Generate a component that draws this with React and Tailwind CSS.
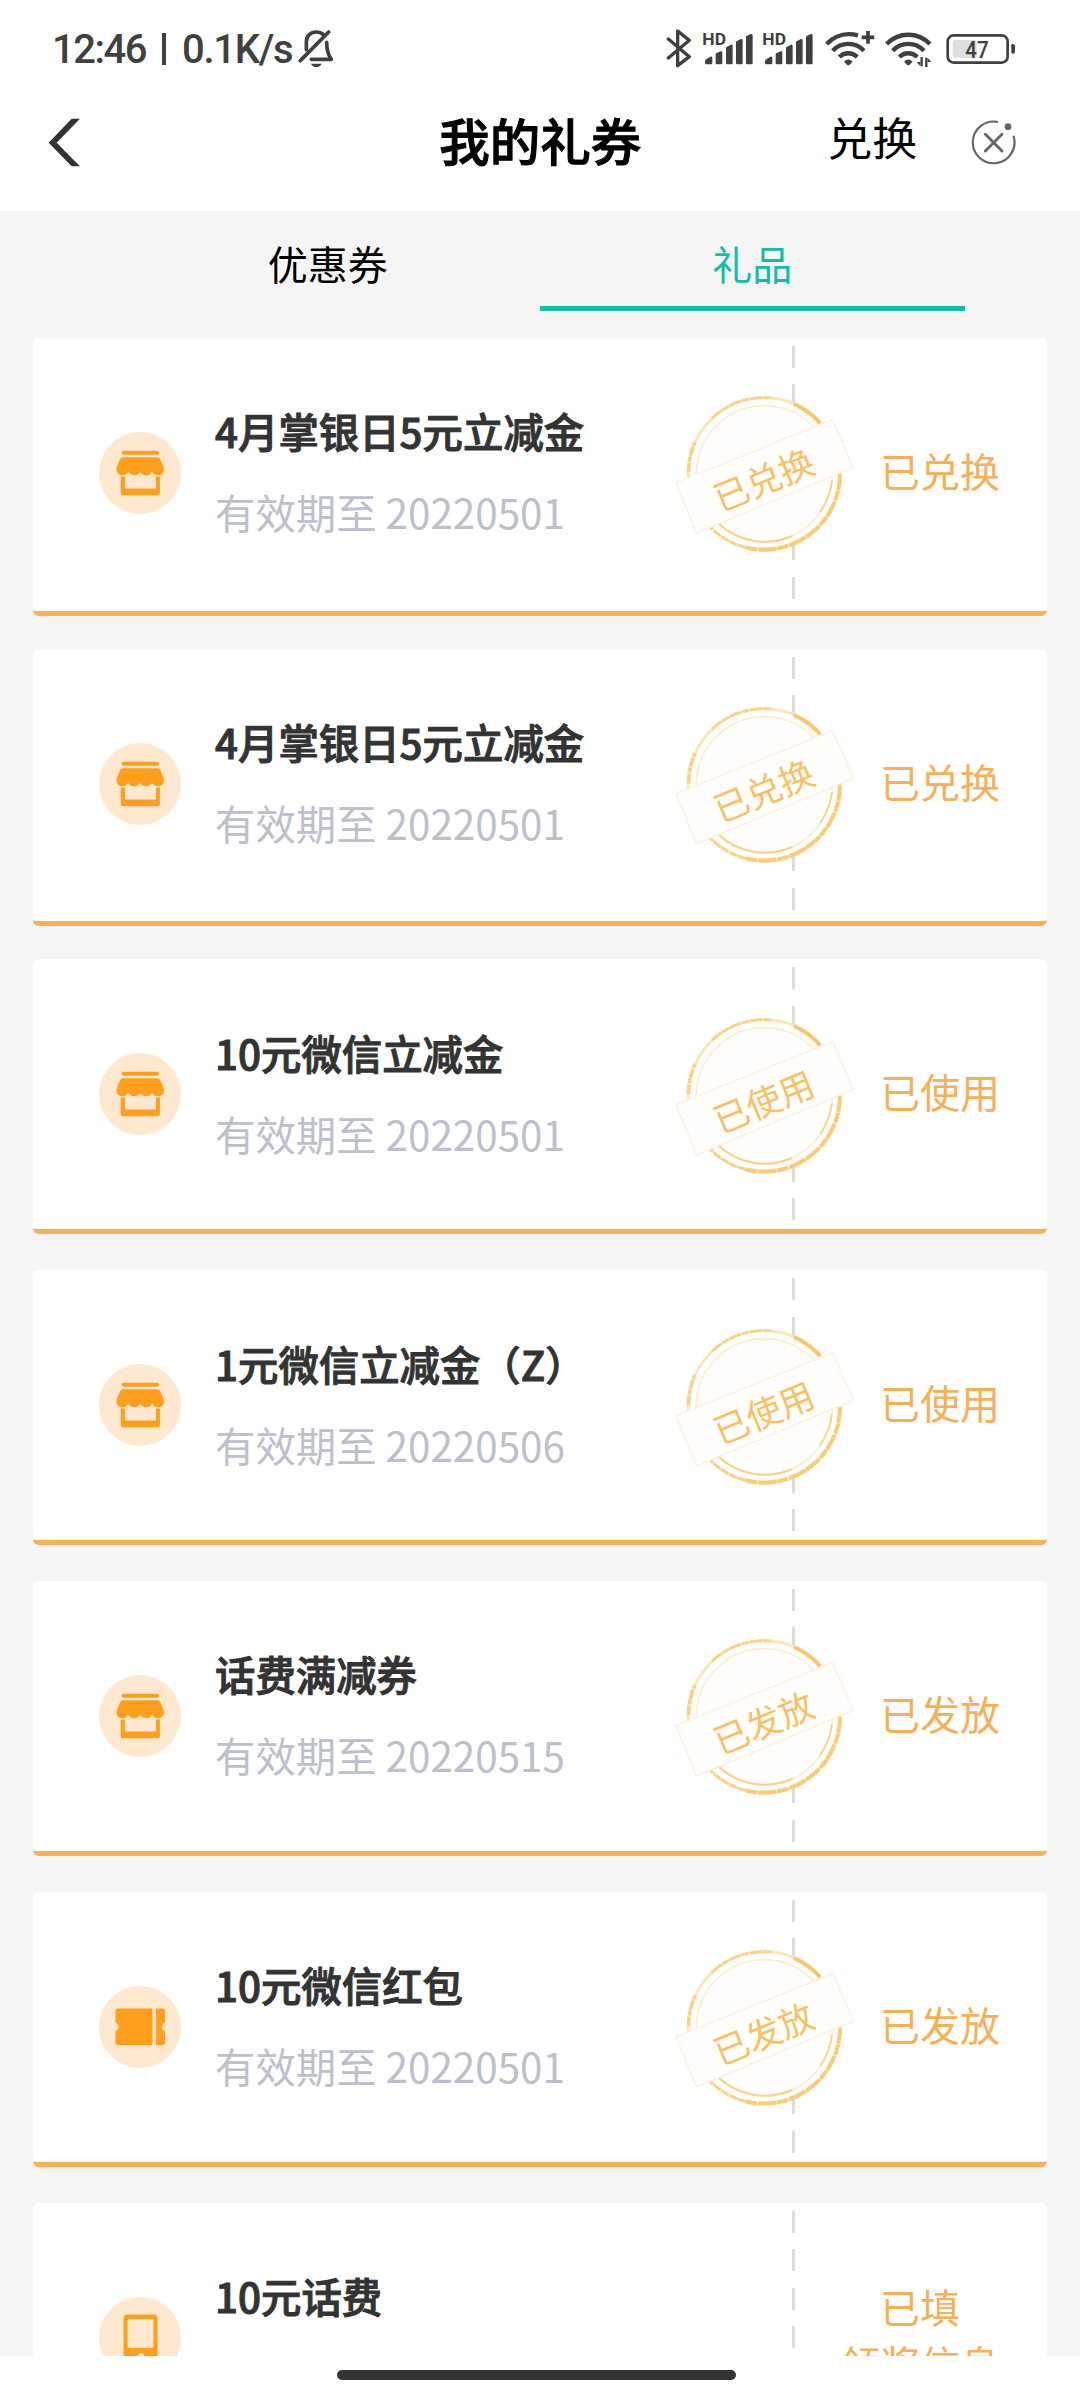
import clsx from "clsx";

const GIFTS = [
  { title: "4月掌银日5元立减金", date: "20220501", status: "已兑换", icon: "store", tall: true },
  { title: "4月掌银日5元立减金", date: "20220501", status: "已兑换", icon: "store", tall: true },
  { title: "10元微信立减金", date: "20220501", status: "已使用", icon: "store" },
  { title: "1元微信立减金（Z）", date: "20220506", status: "已使用", icon: "store" },
  { title: "话费满减券", date: "20220515", status: "已发放", icon: "store" },
  { title: "10元微信红包", date: "20220501", status: "已发放", icon: "ticket" },
  { title: "10元话费", status: "已填", extra: "领奖信息", icon: "phone" },
];

const BellOff = () => (
  <svg viewBox="895 90 110 118" className="w-[36.7px] h-[39.3px]" fill="none" stroke="#404040" strokeWidth="11" strokeLinecap="round" strokeLinejoin="round">
    <path d="M920 152V128c0-18 13-29 30-29 9 0 16 3 21 8" />
    <path d="M981 130c0 24 3 36 14 51h-60" />
    <path d="M902 185 987 99" />
    <path d="M934 194h32c-3 7-9 10-16 10s-13-3-16-10z" fill="#404040" stroke="none" />
  </svg>
);

const Bluetooth = () => (
  <svg viewBox="76 55 78 122" className="w-[26px] h-[40.7px]" fill="none" stroke="#404040" strokeWidth="10" strokeLinecap="round" strokeLinejoin="round">
    <path d="M83 88 146 141 111 168V64L146 92 83 145" />
  </svg>
);

const Signal = () => (
  <svg viewBox="184 64 154 104" className="w-[51.3px] h-[34.7px]" fill="#404040">
    <text x="185" y="105" fontSize="47" fontWeight="700" fontFamily="Roboto, sans-serif" textLength="71" lengthAdjust="spacingAndGlyphs">HD</text>
    <path d="M193 156q0-4 4-7l12-8q6-2 6 4v15q0 4-4 4h-14q-4 0-4-4z" />
    <path d="M225 134q0-3 3-4l12-5q5-1 5 4v31q0 4-4 4h-12q-4 0-4-4z" />
    <path d="M256 115q0-3 3-4l12-6q5-1 5 4v51q0 4-4 4h-12q-4 0-4-4z" />
    <path d="M286 98q0-3 3-4l12-6q5-1 5 4v68q0 4-4 4h-12q-4 0-4-4z" />
    <path d="M316 82q0-3 3-4l12-5q5-1 5 4v83q0 4-4 4h-12q-4 0-4-4z" />
  </svg>
);

const Wifi = ({ plus }) => (
  <svg viewBox="550 58 160 116" className="w-[53.3px] h-[38.7px]" fill="none" stroke="#404040" strokeWidth="13">
    {plus ? (
      <>
        <path d="M558 103C582 78 616 68 652 77" />
        <path d="M663 83h38M682 64v38" strokeWidth="11" />
      </>
    ) : (
      <path d="M558 103C594 66 652 66 688 103" />
    )}
    <path d="M576 123c26-27 68-27 94 0" />
    <path d="M596 142c16-15 38-15 54 0" />
    <path d="M610 156q13-13 26 0l-9 9q-4 3-8 0z" fill="#404040" stroke="none" />
    {!plus && (
      <>
        <path d="M663 142v28M677 144v28" strokeWidth="7" />
        <path d="M648 157h11v13zM692 157h-11v-13z" fill="#404040" stroke="none" />
      </>
    )}
  </svg>
);

const Battery = () => (
  <svg viewBox="914 66 216 100" className="w-[72px] h-[33.3px]">
    <rect x="922" y="76" width="180" height="82" rx="18" fill="none" stroke="#404040" strokeWidth="8" />
    <rect x="937" y="90" width="72" height="54" rx="7" fill="#dedede" />
    <text x="1010" y="143" textAnchor="middle" fontSize="70" fontWeight="500" fontFamily="Roboto, sans-serif" fill="#404040" textLength="70" lengthAdjust="spacingAndGlyphs">47</text>
    <path d="M1113 106q0-4 5-4 6 0 6 6v18q0 5-6 5-5 0-5-4z" fill="#404040" />
  </svg>
);

const StoreIcon = () => (
  <svg viewBox="0 0 82 82" className="w-[82px] h-[82px] shrink-0">
    <circle cx="41" cy="41" r="41" fill="#ffe8d0" />
    <g fill="#ff9f1c">
      <rect x="22.7" y="18.8" width="37.3" height="4" rx="2" />
      <path d="M24 25.3h34.6q2 0 2.7 2l3.4 8c1 4-1 8-5.5 8-3 0-5-1.500-6.200-3.500-1.200 2-3 3.500-5.800 3.500s-4.800-1.500-6-3.500c-1.200 2-3.200 3.500-6 3.500s-4.600-1.500-5.800-3.500c-1.200 2-3.200 3.500-6.200 3.500-4.500 0-6.500-4-5.500-8l3.400-8q.7-2 2.900-2z" />
      <path d="M21.700 44.500h4.300v12h31v-12h3.900v16.500q0 2.300-2.300 2.300H24q-2.300 0-2.300-2.300z" />
    </g>
  </svg>
);

const TicketIcon = () => (
  <svg viewBox="0 0 82 82" className="w-[82px] h-[82px] shrink-0">
    <circle cx="41" cy="41" r="41" fill="#ffe8d0" />
    <g fill="#ff9f1c">
      <path d="M19 22.500h34.500v36.500H19q-2.500 0-2.500-2.500V45a4.500 4.500 0 0 0 0-8.500V25q0-2.500 2.500-2.500z" />
      <path d="M57 22.500h6q3 0 3 2.500v11.500a4.500 4.500 0 0 0 0 8.500v11.500q0 2.500-3 2.500h-6z" />
    </g>
  </svg>
);

const PhoneIcon = () => (
  <svg viewBox="0 0 82 82" className="w-[82px] h-[82px] shrink-0">
    <circle cx="41" cy="41" r="41" fill="#ffe8d0" />
    <rect x="24.500" y="17.500" width="34" height="48" rx="4" fill="#ff9f1c" />
    <rect x="28.500" y="22" width="26" height="29" rx="2" fill="#ffe8d0" />
    <circle cx="42" cy="59" r="3" fill="#ffe8d0" />
  </svg>
);

const ICONS = { store: StoreIcon, ticket: TicketIcon, phone: PhoneIcon };

// Sello circular con la banda inclinada
const Stamp = ({ label }) => (
  <svg viewBox="0 0 190 180" className="absolute left-[636.500px] top-[46.500px] w-[190px] h-[180px]">
    <circle cx="94.300" cy="89.800" r="76.500" fill="#fffefc" />
    <g fill="none" stroke="#f9d28a">
      <circle cx="94.300" cy="89.800" r="76" strokeWidth="3" stroke="#fce5b8" />
      <circle cx="94.300" cy="89.800" r="68" strokeWidth="1.600" stroke="#fdebcf" />
      <path d="M18.500 88A76 76 0 0 1 25 58" strokeWidth="3.800" strokeDasharray="9 1.500 5 1" />
      <path d="M42 34A76 76 0 0 1 102 14" strokeWidth="2.800" strokeDasharray="12 1.500 7 1" />
      <path d="M124 20A76 76 0 0 1 150 39" strokeWidth="4" stroke="#f8c76c" />
      <path d="M170 90A76 76 0 0 1 145 146" strokeWidth="4" stroke="#f8cc78" strokeDasharray="16 1 10 1.500" />
      <path d="M145 146A76 76 0 0 1 76 163.500" strokeWidth="4.200" stroke="#f8cc78" strokeDasharray="11 1 18 1.500" />
      <path d="M76 163.500A76 76 0 0 1 40 143" strokeWidth="3" strokeDasharray="8 1.500" />
      <path d="M162 97A68 68 0 0 1 150 128" strokeWidth="1.800" />
      <path d="M122 152A68 68 0 0 1 48 139" strokeWidth="2" />
    </g>
    <path d="M162.700 35.500 183.300 83.300 26.500 149 6 98.700z" fill="#fffefd" stroke="#fdeedd" strokeWidth="1.400" />
    <text
      x="93.500"
      y="109"
      transform="rotate(-22.500 94 95)"
      textAnchor="middle"
      fontSize="35"
      fontFamily="'Noto Sans CJK SC', sans-serif"
      fill="#f8c164"
    >
      {label}
    </text>
  </svg>
);

const GiftCard = ({ gift }) => {
  const Icon = ICONS[gift.icon];
  return (
    <div
      className={clsx(
        "relative flex shrink-0 rounded-[6px] border-b-[5px] border-[#f7b055] bg-white",
        gift.tall ? "h-[277.800px] mb-[33px]" : "h-[274.800px] mb-[36px]"
      )}
    >
      <div className="flex h-[270px] w-[759px] items-center pl-[66px]">
        <Icon />
        <div className="ml-[34px] pb-[3px] text-[40.400px] leading-[81px] whitespace-nowrap">
          <h2 className="font-medium text-[#333] [-webkit-text-stroke:1px_#333]">{gift.title}</h2>
          <p className="h-[81px] text-[#bcc0cc]">{gift.date && `有效期至 ${gift.date}`}</p>
        </div>
      </div>

      {/* Línea de corte */}
      <div className="flex flex-col gap-[16.500px] pt-2">
        {[...Array(7)].map((_, i) => (
          <div key={i} className="h-[22px] w-[3px] bg-[#dcdce0]" />
        ))}
      </div>

      {!gift.extra && <Stamp label={gift.status} />}

      <div
        className={clsx(
          "flex h-[265px] flex-1 flex-col justify-center pr-[2px] text-center text-[40px] leading-[57px] text-[#f7b055]",
          !gift.extra && "pl-10"
        )}
      >
        <span>{gift.status}</span>
        {gift.extra && <span>{gift.extra}</span>}
      </div>
    </div>
  );
};

const App = () => {
  return (
    <div className="flex h-[2400px] w-[1080px] flex-col overflow-hidden bg-white font-['Noto_Sans_CJK_SC',sans-serif] text-black">
      {/* Barra de estado */}
      <div className="flex h-[97px] shrink-0 items-center pl-[52px] pr-[63px] text-[#404040]">
        <div className="flex items-center font-[Roboto,sans-serif] text-[40px] font-medium leading-none">
          <span className="w-[110px] pt-[2px] tracking-[-1.500px]">12:46</span>
          <span className="h-8 w-1 bg-[#404040]" />
          <span className="ml-4 w-[116px] pt-[2px] tracking-[-1.300px]">0.1K/s</span>
          <BellOff />
        </div>
        <div className="ml-auto flex items-center">
          <Bluetooth />
          <div className="ml-[10px] flex gap-[8.700px]">
            <Signal />
            <Signal />
          </div>
          <div className="ml-[10.500px] flex gap-[6.700px]">
            <Wifi plus />
            <Wifi />
          </div>
          <div className="ml-2">
            <Battery />
          </div>
        </div>
      </div>

      {/* Encabezado */}
      <header className="flex h-[114px] shrink-0 items-start pl-12">
        <svg viewBox="144 350 100 153" className="mt-[19.500px] h-[51px] w-[33.300px]">
          <path d="M146 427 215 355h25l-70 72 70 71h-25z" fill="#333" />
        </svg>
        <h1 className="ml-[358px] mt-[5px] w-[388px] text-[50.500px] font-medium leading-[74px] [-webkit-text-stroke:1px_#000]">我的礼券</h1>
        <span className="mt-[8px] w-[143px] text-[45px] leading-[64px]">兑换</span>
        <svg viewBox="990 326 140 140" className="mt-[22px] h-[46.700px] w-[46.700px]" fill="none" stroke="#666" strokeWidth="6.500" strokeLinecap="round">
          <path d="M1071 334.500A62.500 62.500 0 1 0 1121 379" />
          <path d="M1036 372l50 50M1086 372l-50 50" strokeWidth="8.500" />
          <circle cx="1104" cy="349" r="10" fill="#666" stroke="none" />
        </svg>
      </header>

      <main className="flex h-[2145px] shrink-0 flex-col overflow-hidden bg-[#f5f5f5]">
        <nav className="mx-[115px] flex h-[99.500px] shrink-0 text-center text-[40px] leading-[104px]">
          <div className="h-full flex-1">优惠券</div>
          <div className="-ml-px h-full flex-1 border-b-[5px] border-[#11bfa8] text-[#11bfa8]">礼品</div>
        </nav>
        <div className="mx-[33px] mt-[27.300px] flex flex-col">
          {GIFTS.map((gift, i) => (
            <GiftCard key={i} gift={gift} />
          ))}
        </div>
      </main>

      <div className="ml-[337px] mt-[14px] h-[10px] w-[399px] shrink-0 rounded-full bg-[#333]" />
    </div>
  );
};

export default App;
